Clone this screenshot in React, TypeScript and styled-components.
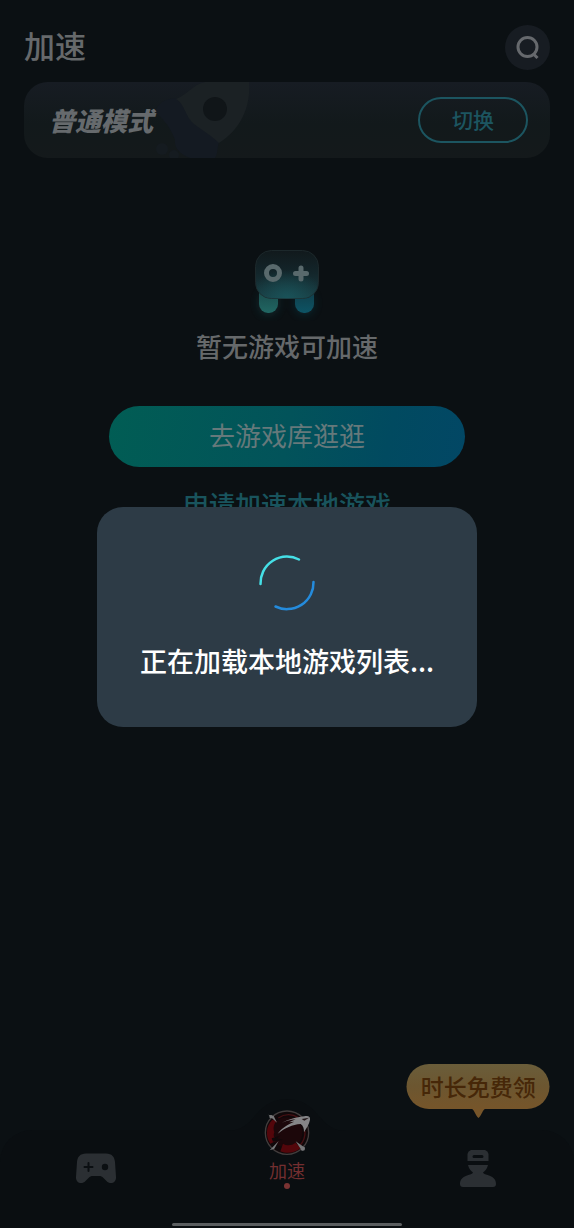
import React from "react";
import styled, { createGlobalStyle } from "styled-components";

const GlobalStyle = createGlobalStyle`
  * { box-sizing: border-box; }
  html, body { margin: 0; background: #0b1013; }
  body, button { font-family: "Noto Sans CJK SC", sans-serif; }
  button { padding: 0; border: 0; background: none; cursor: pointer; }
`;

const Page = styled.div`
  min-height: 100vh;
  display: flex;
  flex-direction: column;
  background: #0b1013;
`;

const Header = styled.header`
  display: flex;
  align-items: flex-start;
  justify-content: space-between;
  padding: 25px 24px 12px;
`;

const Title = styled.h1`
  margin: 0;
  font-size: 31px;
  line-height: 40px;
  font-weight: 500;
  color: #66696b;
`;

const SearchButton = styled.button`
  display: flex;
  align-items: center;
  justify-content: center;
  width: 45px;
  height: 45px;
  border-radius: 50%;
  background: #171c22;
`;

const ModeCard = styled.section`
  position: relative;
  display: flex;
  align-items: center;
  justify-content: space-between;
  height: 76px;
  margin: 0 24px;
  padding: 0 22px 0 25px;
  border-radius: 24px;
  overflow: hidden;
  background: linear-gradient(#171c23, #12191b 55%, #14191b);
`;

const RocketArt = styled.svg`
  position: absolute;
  left: 126px;
  top: 0;
`;

const ModeName = styled.strong`
  position: relative;
  font-size: 26px;
  line-height: 36px;
  font-weight: 900;
  font-style: italic;
  color: #666a6d;
`;

const SwitchButton = styled.button`
  width: 110px;
  height: 46px;
  padding-bottom: 2px;
  border: 2px solid #1c5560;
  border-radius: 23px;
  font-size: 21px;
  line-height: 30px;
  font-weight: 500;
  color: #1c5560;
`;

const Empty = styled.main`
  flex: 1;
  display: flex;
  flex-direction: column;
  align-items: center;
  padding-top: 87px;
`;

const EmptyText = styled.p`
  margin: 6px 0 41px;
  font-size: 26px;
  line-height: 38px;
  font-weight: 500;
  color: #66696b;
`;

const LibraryButton = styled.button`
  width: 62%;
  height: 61px;
  padding-bottom: 4px;
  border-radius: 31px;
  background: linear-gradient(100deg, #015d54, #02535a 50%, #014a60 78%, #024765);
  font-size: 26px;
  line-height: 38px;
  color: #66797b;
`;

const LocalLink = styled.a`
  margin-top: 18px;
  font-size: 26px;
  line-height: 38px;
  font-weight: 500;
  text-decoration: none;
  color: #19545d;
`;

const TabBar = styled.nav`
  position: relative;
  display: grid;
  grid-template-columns: repeat(3, 1fr);
  height: 98px;
  border-radius: 32px 32px 0 0;
  background: #0a0e11;
`;

const Bump = styled.svg`
  position: absolute;
  left: 50%;
  top: -32px;
  transform: translateX(-50%);
`;

const Tab = styled.button<{ $raised?: boolean }>`
  position: relative;
  display: flex;
  flex-direction: column;
  align-items: center;
  justify-content: flex-start;
  padding-top: ${(p) => (p.$raised ? 0 : 20)}px;
  margin-top: ${(p) => (p.$raised ? -21 : 0)}px;
`;

const TabLabel = styled.span`
  font-size: 18px;
  line-height: 26px;
  color: #732e30;
`;

const ActiveDot = styled.span`
  width: 6px;
  height: 6px;
  border-radius: 50%;
  background: #7b3333;
`;

const Bubble = styled.span`
  position: absolute;
  left: 50%;
  bottom: 119px;
  transform: translateX(-50%);
  height: 45px;
  padding: 0 14px;
  border-radius: 23px;
  background: linear-gradient(#6a5d3a, #6c5630 50%, #76552a);
  font-size: 23px;
  line-height: 45px;
  font-weight: 500;
  white-space: nowrap;
  color: #462708;
`;

const BubbleTail = styled.svg`
  position: absolute;
  left: 50%;
  top: 44px;
  transform: translateX(-50%);
`;

const HomeIndicator = styled.div`
  position: absolute;
  left: 30%;
  right: 30%;
  bottom: 2px;
  height: 3px;
  border-radius: 2px;
  background: #5b5e60;
`;

const Overlay = styled.div`
  position: fixed;
  inset: 0;
  display: flex;
  align-items: center;
  justify-content: center;
  padding-top: 6px;
`;

const Dialog = styled.div`
  display: flex;
  flex-direction: column;
  align-items: center;
  width: 380px;
  max-width: 90%;
  padding: 48px 24px 46px;
  border-radius: 26px;
  background: #2d3b46;
`;

const DialogText = styled.p`
  margin: 30px 0 0;
  font-size: 27px;
  line-height: 40px;
  font-weight: 500;
  white-space: nowrap;
  color: #ffffff;
`;

const SearchIcon = () => (
  <svg width="24" height="24" viewBox="0 0 24 24" fill="none" stroke="#66696d" strokeWidth="3">
    <circle cx="11.500" cy="11" r="9.500" />
    <path d="M17 17.500L21.500 22" />
  </svg>
);

const Rocket = () => (
  <RocketArt width="102" height="76" viewBox="0 0 102 76" aria-hidden="true">
    <path d="M5 30C8 20 18 15 30 17L69 60C67 66 68 72 65 76H40C30 72 24 66 25 58C20 44 13 37 5 30Z" fill="#141a22" />
    <path d="M26 17C37 13 42 3 55 0H99C101 24 91 47 69 61C61 53 53 49 44 42C35 35 35 22 26 17Z" fill="#1b2124" />
    <circle cx="65" cy="27" r="12" fill="#101518" />
    <circle cx="12" cy="67" r="6" fill="#151b20" />
    <circle cx="24" cy="73" r="5" fill="#151b20" />
  </RocketArt>
);

const ControllerArt = () => (
  <svg width="80" height="76" viewBox="0 0 80 76" aria-hidden="true">
    <defs>
      <linearGradient id="shell" x1="0" y1="0" x2="0" y2="1">
        <stop offset="0" stopColor="#11191c" />
        <stop offset="0.450" stopColor="#13252a" />
        <stop offset="1" stopColor="#193c42" />
      </linearGradient>
      <radialGradient id="shine" cx="0.500" cy="1" r="0.600">
        <stop offset="0" stopColor="#1a5359" />
        <stop offset="1" stopColor="#1a5359" stopOpacity="0" />
      </radialGradient>
      <linearGradient id="legLeft" x1="0" y1="0" x2="0" y2="1">
        <stop offset="0" stopColor="#163d40" />
        <stop offset="1" stopColor="#216763" />
      </linearGradient>
      <linearGradient id="legRight" x1="0" y1="0" x2="0" y2="1">
        <stop offset="0" stopColor="#12333c" />
        <stop offset="1" stopColor="#0d5465" />
      </linearGradient>
      <filter id="glow" x="-50%" y="-50%" width="200%" height="200%">
        <feGaussianBlur stdDeviation="4" />
      </filter>
    </defs>
    <g filter="url(#glow)" opacity="0.400">
      <rect x="12" y="46" width="19" height="24" rx="9" fill="#145055" />
      <rect x="48" y="46" width="19" height="24" rx="9" fill="#0d4654" />
    </g>
    <rect x="12" y="36" width="19" height="32" rx="9" fill="url(#legLeft)" />
    <rect x="48" y="36" width="19" height="32" rx="9" fill="url(#legRight)" />
    <rect x="8.500" y="5.500" width="63" height="48" rx="16" fill="url(#shell)" stroke="#1c282b" />
    <rect x="8.500" y="5.500" width="63" height="48" rx="16" fill="url(#shine)" />
    <circle cx="26" cy="28" r="6.500" fill="none" stroke="#59696c" strokeWidth="5" />
    <path d="M54 23V34M48.500 28.500H59.500" stroke="#59696c" strokeWidth="5" strokeLinecap="round" />
  </svg>
);

const Spinner = () => (
  <svg width="56" height="56" viewBox="0 0 56 56" fill="none" strokeWidth="2.500" strokeLinecap="round" aria-hidden="true">
    <path d="M1.500 29A26.500 26.500 0 0 1 40 4.500" stroke="#45dfe6" />
    <path d="M54.500 27A26.500 26.500 0 0 1 16.500 51.500" stroke="#248bdc" />
  </svg>
);

const GamepadIcon = () => (
  <svg width="42" height="36" viewBox="0 0 42 36" aria-hidden="true">
    <path d="M11 3.500H31C37 3.500 39.500 7 40 12L41 27C41.500 33 35 35 31.500 31L28.500 28C27 26.500 26 26 24 26H18C16 26 15 26.500 13.500 28L10.500 31C7 35 .5 33 1 27L2 12C2.500 7 5 3.500 11 3.500Z" fill="#2b2f33" />
    <path d="M13.500 13V21M9.500 17H17.500" stroke="#0b0f12" strokeWidth="2" strokeLinecap="round" />
    <circle cx="30" cy="17" r="3.200" fill="#0b0f12" />
  </svg>
);

const ProfileIcon = () => (
  <svg width="38" height="38" viewBox="0 0 38 38" fill="#2b2f33" aria-hidden="true">
    <path fillRule="evenodd" d="M12 0H26Q29 1 29.500 4V11H8.500V4Q9 1 12 0ZM15 5Q13.500 5 13.500 6.500T15 8H23Q24.500 8 24.500 6.500T23 5Z" />
    <path d="M9 15H29C28 19 26 21 24 22.500C24.500 24 27 24.500 30 25.500C35 27.500 37 30 37 34Q37 37 34 37H4Q1 37 1 34C1 30 3 27.500 8 25.500C11 24.500 13.500 24 14 22.500C12 21 10 19 9 15Z" />
  </svg>
);

const BoostLogo = () => (
  <svg width="48" height="48" viewBox="0 0 144 144" aria-hidden="true">
    <circle cx="72" cy="71" r="65" fill="#10080a" stroke="#423d3d" strokeWidth="4" />
    <circle cx="72" cy="71" r="46" fill="#1c070a" />
    <path d="M28 32C8 52 7 82 22 104L46 92C32 88 30 80 34 70C29 57 33 44 42 36Z" fill="#53060b" />
    <path d="M60 104L52 127C74 136 98 131 113 117L98 101C86 110 72 111 60 104Z" fill="#53060b" />
    <path d="M46 27C65 14 88 14 104 25M126 66C127 84 120 100 110 110" fill="none" stroke="#451013" strokeWidth="4" />
    <path d="M56 42C78 29 104 24 128 21C138 20 142 24 141 32C139 46 130 57 123 70C123 58 121 51 113 45C88 47 66 57 44 74C56 57 74 46 94 38L78 40L98 31C82 33 69 36 56 42Z" fill="#858587" />
    <path d="M116 30L138 26L124 35Z" fill="#231719" />
    <path d="M16 17L42 41L32 21ZM47 96L20 124L34 119ZM98 97L117 126L126 116Z" fill="#777779" />
    <circle cx="24" cy="23" r="5" fill="#777779" />
    <circle cx="120" cy="119" r="6" fill="#777779" />
    <path d="M26 88L52 80L42 88L60 92L30 98Z" fill="#10080a" />
  </svg>
);

export default function App() {
  return (
    <>
      <GlobalStyle />
      <Page>
        <Header>
          <Title>加速</Title>
          <SearchButton aria-label="搜索">
            <SearchIcon />
          </SearchButton>
        </Header>
        <ModeCard>
          <Rocket />
          <ModeName>普通模式</ModeName>
          <SwitchButton>切换</SwitchButton>
        </ModeCard>
        <Empty>
          <ControllerArt />
          <EmptyText>暂无游戏可加速</EmptyText>
          <LibraryButton>去游戏库逛逛</LibraryButton>
          <LocalLink href="#local">申请加速本地游戏</LocalLink>
        </Empty>
        <TabBar>
          <Bump width="120" height="34" viewBox="0 0 120 34" aria-hidden="true">
            <path d="M0 33C30 33 26 2 60 1C94 2 90 33 120 33V34H0Z" fill="#0a0e11" />
          </Bump>
          <Tab aria-label="游戏库">
            <GamepadIcon />
          </Tab>
          <Tab $raised aria-current="page">
            <BoostLogo />
            <TabLabel>加速</TabLabel>
            <ActiveDot />
          </Tab>
          <Tab aria-label="我的">
            <ProfileIcon />
            <Bubble>
              时长免费领
              <BubbleTail width="16" height="10" viewBox="0 0 16 10" aria-hidden="true">
                <path d="M0 0H16C12 1 11 8 8 10C5 8 4 1 0 0Z" fill="#76552a" />
              </BubbleTail>
            </Bubble>
          </Tab>
          <HomeIndicator />
        </TabBar>
      </Page>
      <Overlay>
        <Dialog role="dialog" aria-modal="true" aria-labelledby="loading-text">
          <Spinner />
          <DialogText id="loading-text">正在加载本地游戏列表...</DialogText>
        </Dialog>
      </Overlay>
    </>
  );
}
